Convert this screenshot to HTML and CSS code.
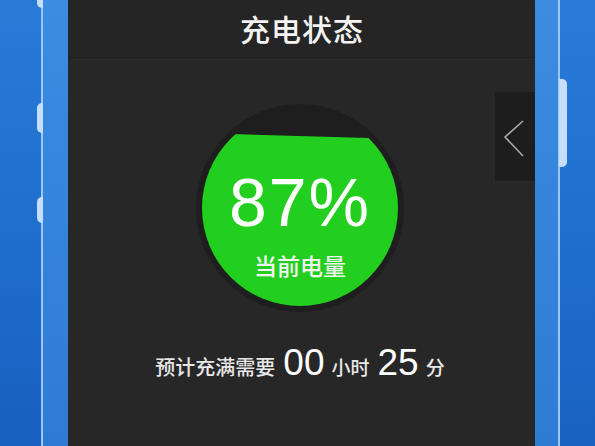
FILE: index.html
```html
<!DOCTYPE html>
<html lang="zh">
<head>
<meta charset="utf-8">
<link rel="stylesheet" href="styles.css">
</head>
<body>
<div class="device">
  <div class="bezel bezel-left">
    <div class="b-outer"></div>
    <div class="b-line"></div>
    <div class="b-inner"></div>
    <span class="key key-l1"></span>
    <span class="key key-l2"></span>
    <span class="key key-l3"></span>
  </div>
  <main class="screen">
    <header class="header">充电状态</header>
    <section class="content">
      <div class="gauge">
        <svg class="gauge-bg" width="210" height="210" viewBox="0 0 210 210">
          <defs>
            <clipPath id="level">
              <polygon points="0,30 210,36 210,210 0,210"/>
            </clipPath>
          </defs>
          <circle cx="105" cy="105" r="104" fill="#1e1e1e"/>
          <circle cx="105" cy="105" r="98" fill="#22cf1e" clip-path="url(#level)"/>
        </svg>
        <div class="pct">87%</div>
        <div class="pct-label">当前电量</div>
      </div>
      <div class="eta">
        <span class="eta-text">预计充满需要</span>
        <span class="eta-num">00</span>
        <span class="eta-unit">小时</span>
        <span class="eta-num">25</span>
        <span class="eta-unit">分</span>
      </div>
    </section>
    <div class="side-tab">
      <svg width="40" height="89" viewBox="0 0 40 89">
        <polyline points="28,29 10,45 28,64" fill="none" stroke="#a9a9a9" stroke-width="1.6"/>
      </svg>
    </div>
  </main>
  <div class="bezel bezel-right">
    <div class="b-inner r-inner"></div>
    <div class="b-line"></div>
    <div class="b-outer r-outer"></div>
    <span class="key key-r1"></span>
  </div>
</div>
</body>
</html>
```

FILE: styles.css
```css
html, body {
  margin: 0;
  padding: 0;
}
body {
  width: 595px;
  height: 446px;
  overflow: hidden;
  background: #1e6dcb;
  font-family: "Liberation Sans", "Noto Sans CJK SC", sans-serif;
}
.device {
  display: flex;
  width: 595px;
  height: 446px;
}
.bezel {
  position: relative;
  display: flex;
  height: 100%;
}
.bezel-left { width: 68px; }
.bezel-right { width: 60px; }
.b-outer {
  width: 41px;
  background: linear-gradient(180deg, #2a7ad8 0%, #1f6fcf 50%, #185fbf 100%);
}
.r-outer {
  width: 35px;
  background: linear-gradient(180deg, #2a7bd9 0%, #1f6fcf 50%, #1a62c2 100%);
}
.b-line {
  width: 2px;
  background: #9cc6f3;
}
.b-inner {
  width: 25px;
  background: linear-gradient(180deg, #3c8ce2 0%, #3584dc 50%, #2e7bd4 100%);
}
.r-inner { width: 23px; }
.key {
  position: absolute;
  width: 6px;
  background: #c7def8;
}
.key-l1 { left: 37px; top: -4px; height: 12px; border-radius: 0 0 0 5px; }
.key-l2 { left: 37px; top: 103px; height: 30px; border-radius: 5px 0 0 5px; }
.key-l3 { left: 37px; top: 197px; height: 26px; border-radius: 5px 0 0 5px; }
.key-r1 { left: 24px; top: 79px; width: 8px; height: 88px; border-radius: 0 5px 5px 0; }

.screen {
  position: relative;
  width: 467px;
  height: 100%;
  background: #272727;
  display: flex;
  flex-direction: column;
}
.header {
  height: 57px;
  border-bottom: 1px solid #202020;
  background: #252525;
  color: #f4f4f4;
  font-family: "Noto Sans CJK SC", sans-serif;
  font-weight: 500;
  font-size: 30px;
  line-height: 57px;
  text-align: center;
  letter-spacing: 1px;
  padding-left: 1px;
}
.content {
  display: flex;
  flex-direction: column;
  align-items: center;
  padding-top: 45px;
}
.gauge {
  position: relative;
  width: 210px;
  height: 210px;
  margin-left: -3px;
  display: flex;
  flex-direction: column;
  align-items: center;
}
.gauge-bg {
  position: absolute;
  left: 0;
  top: 0;
}
.pct {
  position: relative;
  margin-top: 65px;
  font-family: "Liberation Sans", sans-serif;
  font-size: 68px;
  line-height: 68px;
  color: #ffffff;
  letter-spacing: 2px;
}
.pct-label {
  position: relative;
  margin-top: 18px;
  font-family: "Noto Sans CJK SC", sans-serif;
  font-weight: 500;
  font-size: 23px;
  line-height: 23px;
  color: #f2f2f2;
}
.eta {
  display: flex;
  align-items: baseline;
  margin-top: 31px;
  margin-left: -3px;
  color: #e8e8e8;
}
.eta-text, .eta-unit {
  font-family: "Noto Sans CJK SC", sans-serif;
  font-weight: 500;
  font-size: 20px;
  line-height: 20px;
}
.eta-unit { font-size: 19px; margin-left: 7px; }
.eta-num {
  font-family: "Liberation Sans", sans-serif;
  font-size: 37px;
  line-height: 37px;
  color: #ffffff;
  margin-left: 8px;
}
.side-tab {
  position: absolute;
  right: 0;
  top: 92px;
  width: 40px;
  height: 89px;
  background: #1d1d1d;
}
.side-tab svg { display: block; }
```
